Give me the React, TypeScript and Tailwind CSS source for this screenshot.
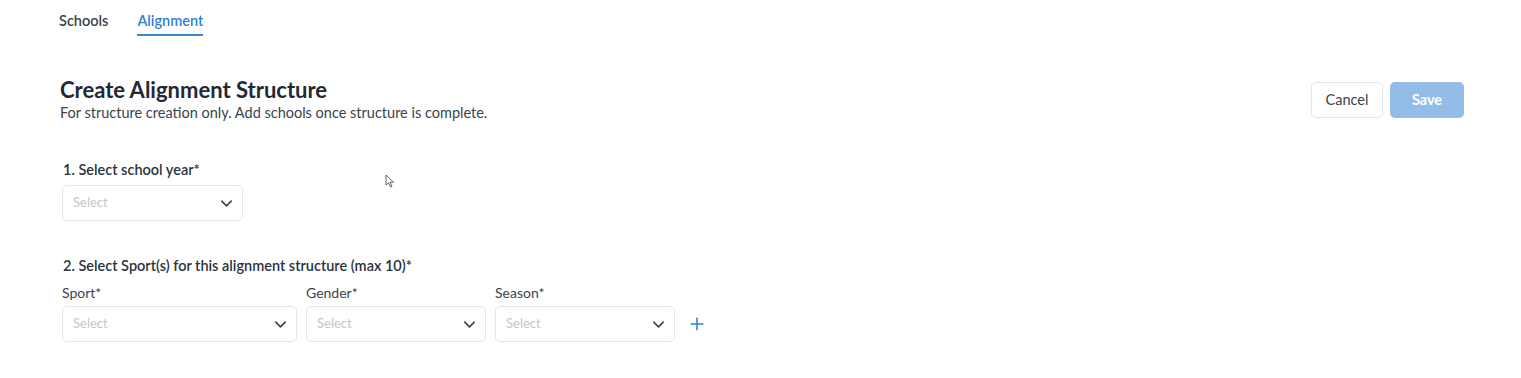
import { ChevronDown, Plus } from "lucide-react";

function SelectBox({ width }: { width: string }) {
  return (
    <div
      className={`flex h-[36px] items-center justify-between rounded-[5px] border border-[#e3e6ea] bg-white pl-[10px] pr-[6px] ${width}`}
    >
      <span className="text-[13px] text-[#c3c7cc]">Select</span>
      <ChevronDown className="h-[19px] w-[19px] text-[#3a4350]" strokeWidth={2} />
    </div>
  );
}

function Field({ label, width }: { label: string; width: string }) {
  return (
    <div className="flex flex-col">
      <div className="mb-[4px] text-[14px] leading-[18px] text-[#3a4350]">{label}</div>
      <SelectBox width={width} />
    </div>
  );
}

export default function App() {
  return (
    <div
      className="relative min-h-[378px] w-full bg-white text-[#212b36]"
      style={{ fontFamily: "Lato, 'Open Sans', sans-serif" }}
    >
      {/* Tabs */}
      <div className="flex gap-[29px] pl-[59px]">
        <div className="pt-[11px] pb-[5px] text-[14.5px] font-semibold leading-[20px] text-[#39424c]">Schools</div>
        <div className="border-b-[2px] border-[#3a86d8] pt-[11px] pb-[3px] text-[14.5px] font-semibold leading-[20px] text-[#2f7fd6]">
          Alignment
        </div>
      </div>

      {/* Header */}
      <div className="mt-[42px] flex items-start justify-between pl-[60px] pr-[57px]">
        <div>
          <div className="text-[22px] font-bold leading-[24px] text-[#1f2a36]">Create Alignment Structure</div>
          <div className="mt-[2px] text-[14.5px] leading-[18px] text-[#3a4350]">
            For structure creation only. Add schools once structure is complete.
          </div>
        </div>
        <div className="mt-[4px] flex gap-[7px]">
          <button className="h-[36px] w-[72px] rounded-[5px] border border-[#e3e6ea] bg-white text-[14.5px] text-[#3a4350]">
            Cancel
          </button>
          <button className="h-[36px] w-[74px] rounded-[5px] bg-[#93bde8] text-[14.5px] font-bold text-white">
            Save
          </button>
        </div>
      </div>

      {/* Step 1 */}
      <div className="mt-[39px] pl-[62px]">
        <div className="mb-[6px] pl-[1px] text-[14.5px] font-semibold leading-[18px] text-[#2a333e]">
          1. Select school year*
        </div>
        <SelectBox width="w-[181px]" />
      </div>

      {/* Step 2 */}
      <div className="mt-[36px] pl-[62px]">
        <div className="mb-[9px] pl-[1px] text-[14.5px] font-semibold leading-[18px] text-[#2a333e]">
          2. Select Sport(s) for this alignment structure (max 10)*
        </div>
        <div className="flex items-end gap-[9px]">
          <Field label="Sport*" width="w-[235px]" />
          <Field label="Gender*" width="w-[180px]" />
          <Field label="Season*" width="w-[180px]" />
          <div className="flex h-[36px] items-center pl-[3px]">
            <Plus className="h-[20px] w-[20px] text-[#2f7fd6]" strokeWidth={1.8} />
          </div>
        </div>
      </div>

      {/* mouse pointer */}
      <svg className="absolute left-[385px] top-[174px]" width="10" height="14" viewBox="0 0 10 14">
        <path d="M1 1 L1 11 L3.5 8.8 L5.5 13 L7 12.3 L5.1 8.2 L8.5 8.2 Z" fill="white" stroke="#555" strokeWidth="0.9" />
      </svg>
    </div>
  );
}
